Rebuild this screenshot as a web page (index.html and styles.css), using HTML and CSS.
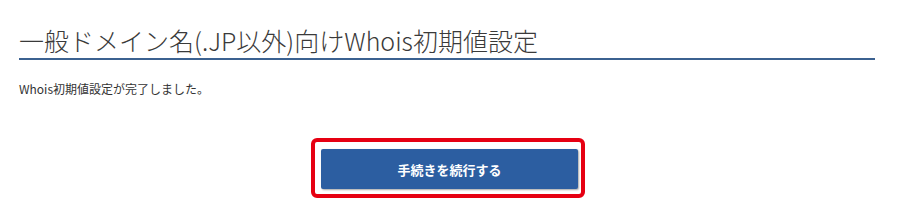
FILE: index.html
```html
<!DOCTYPE html>
<html lang="ja">
<head>
<meta charset="utf-8">
<link rel="stylesheet" href="styles.css">
</head>
<body>
<main class="page">
  <h1 class="title">一般ドメイン名(.JP以外)向けWhois初期値設定</h1>
  <p class="message">Whois初期値設定が完了しました。</p>
  <div class="actions">
    <div class="highlight">
      <button class="btn-primary" type="button">手続きを続行する</button>
    </div>
  </div>
</main>
</body>
</html>
```
FILE: styles.css
```css
html, body {
  margin: 0;
  padding: 0;
  background: #ffffff;
}
body {
  font-family: "Noto Sans CJK JP", "Noto Sans", "Liberation Sans", sans-serif;
  color: #333333;
}
.page {
  padding: 24px 25px 0 19px;
}
.title {
  margin: 0;
  font-size: 25px;
  font-weight: 300;
  line-height: 33px;
  color: #3a3a3a;
  padding-bottom: 1px;
  border-bottom: 2px solid #3b6190;
}
.message {
  margin: 20px 0 0 0;
  font-size: 12px;
  line-height: 18px;
  color: #333333;
}
.actions {
  display: flex;
  justify-content: center;
  margin-top: 40px;
  padding-left: 2px;
}
.highlight {
  border: 4px solid #e60012;
  border-radius: 6px;
  padding: 7px 3px 5px 6px;
}
.btn-primary {
  display: block;
  width: 257px;
  height: 40px;
  border: none;
  border-radius: 2px;
  background: #2c5ea1;
  color: #ffffff;
  font-family: "Noto Sans CJK JP", "Noto Sans", sans-serif;
  font-size: 13px;
  font-weight: 700;
  box-shadow: 1px 1px 2px rgba(0, 0, 0, 0.35);
}
```
